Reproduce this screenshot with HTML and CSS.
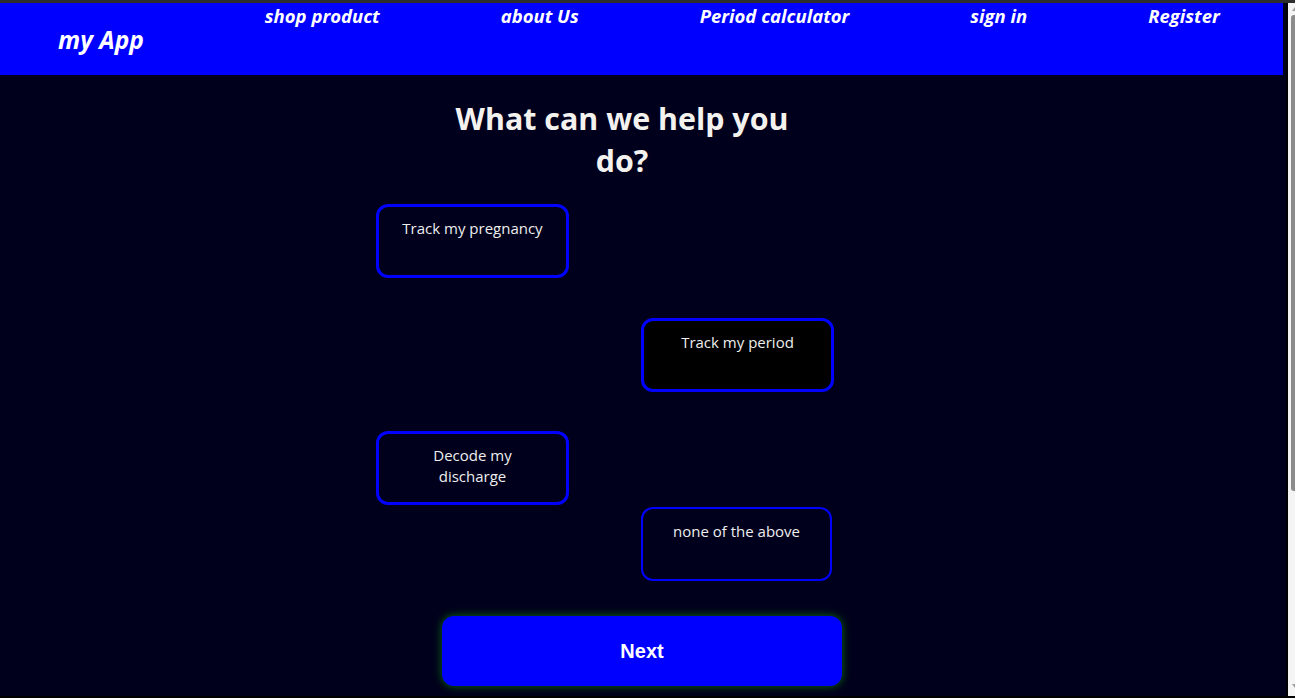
FILE: index.html
```html
<!DOCTYPE html>
<html lang="en">
<head>
<meta charset="utf-8">
<title>my App</title>
<link rel="stylesheet" href="styles.css">
</head>
<body>
<div class="window">
  <div class="page">
    <nav class="nav">
      <div class="logo">my App</div>
      <ul class="links">
        <li>shop product</li>
        <li>about Us</li>
        <li>Period calculator</li>
        <li>sign in</li>
        <li>Register</li>
      </ul>
    </nav>
    <main class="main">
      <h1 class="title">What can we help you do?</h1>
      <div class="options">
        <button class="opt opt-left">Track my pregnancy</button>
        <button class="opt opt-right opt-dark">Track my period</button>
        <button class="opt opt-left opt-decode">Decode my<br>discharge</button>
        <button class="opt opt-right opt-none">none of the above</button>
      </div>
      <button class="next">Next</button>
    </main>
  </div>
  <div class="divider"></div>
  <div class="scrollbar">
    <div class="arrow-up"></div>
    <div class="thumb"></div>
    <div class="track"></div>
    <div class="arrow-down"></div>
  </div>
</div>
</body>
</html>
```
FILE: styles.css
```css
html, body {
  margin: 0;
  padding: 0;
  background: #000;
}

.window {
  display: flex;
  height: 698px;
  box-sizing: border-box;
  border-top: 3px solid #2e2e2e;
  border-bottom: 2px solid #000;
  overflow: hidden;
}

.page {
  flex: 1;
  background: #00001c;
  padding-right: 3px;
  font-family: "Open Sans", "Noto Sans", sans-serif;
  color: #f2f2f2;
}

.divider {
  width: 2px;
  background: #000;
}

.scrollbar {
  width: 7px;
  background: #f4f4f4;
  display: flex;
  flex-direction: column;
  align-items: flex-end;
  padding: 4px 0 4px;
  box-sizing: border-box;
}

.arrow-up {
  width: 0;
  height: 0;
  border-left: 3px solid transparent;
  border-bottom: 4px solid #a0a0a0;
  margin-bottom: 4px;
}

.thumb {
  width: 4px;
  height: 476px;
  background: #8c8c8c;
  border-radius: 3px 0 0 3px;
}

.track {
  flex: 1;
}

.arrow-down {
  width: 0;
  height: 0;
  border-left: 3px solid transparent;
  border-top: 4px solid #a0a0a0;
  margin-bottom: 4px;
}

/* Navigation */
.nav {
  display: flex;
  align-items: flex-start;
  gap: 121px;
  height: 72px;
  background: #0000ff;
  padding-left: 58px;
  font-style: italic;
  font-weight: 700;
  color: #fff;
}

.logo {
  font-size: 24.5px;
  line-height: 28px;
  margin-top: 23px;
}

.links {
  display: flex;
  gap: 121px;
  list-style: none;
  margin: 0;
  padding: 3px 0 0;
  font-size: 18.5px;
  line-height: 20px;
}

/* Main */
.main {
  display: flex;
  flex-direction: column;
  align-items: flex-start;
}

.title {
  width: 360px;
  margin: 23px 0 0 442px;
  font-size: 30.4px;
  line-height: 42px;
  font-weight: 700;
  text-align: center;
  color: #f4f2ef;
}

.options {
  display: flex;
  flex-direction: column;
  align-items: flex-start;
  margin: 22px 0 0 376px;
  width: 458px;
}

.opt {
  box-sizing: border-box;
  width: 193px;
  height: 74px;
  border: 3px solid #0000ff;
  border-radius: 12px;
  background: transparent;
  color: #eeeeee;
  font-family: "Open Sans", "Noto Sans", sans-serif;
  font-size: 15px;
  line-height: 20px;
  text-align: center;
  padding: 11px 4px 0;
  display: flex;
  justify-content: center;
  align-items: flex-start;
}

.opt-right {
  margin-left: 265px;
}

.opt-dark {
  background: #000;
  margin-top: 40px;
}

.opt-decode {
  margin-top: 39px;
  line-height: 21px;
}

.opt-none {
  width: 191px;
  border-width: 2px;
  margin-top: 2px;
  padding-top: 12px;
}

.next {
  box-sizing: border-box;
  width: 400px;
  height: 70px;
  margin: 35px 0 0 442px;
  border: none;
  border-radius: 12px;
  background: #0000ff;
  color: #fff;
  font-family: "Liberation Sans", Arial, sans-serif;
  font-weight: 700;
  font-size: 20px;
  box-shadow: 0 0 9px #0b6e10;
}
```
